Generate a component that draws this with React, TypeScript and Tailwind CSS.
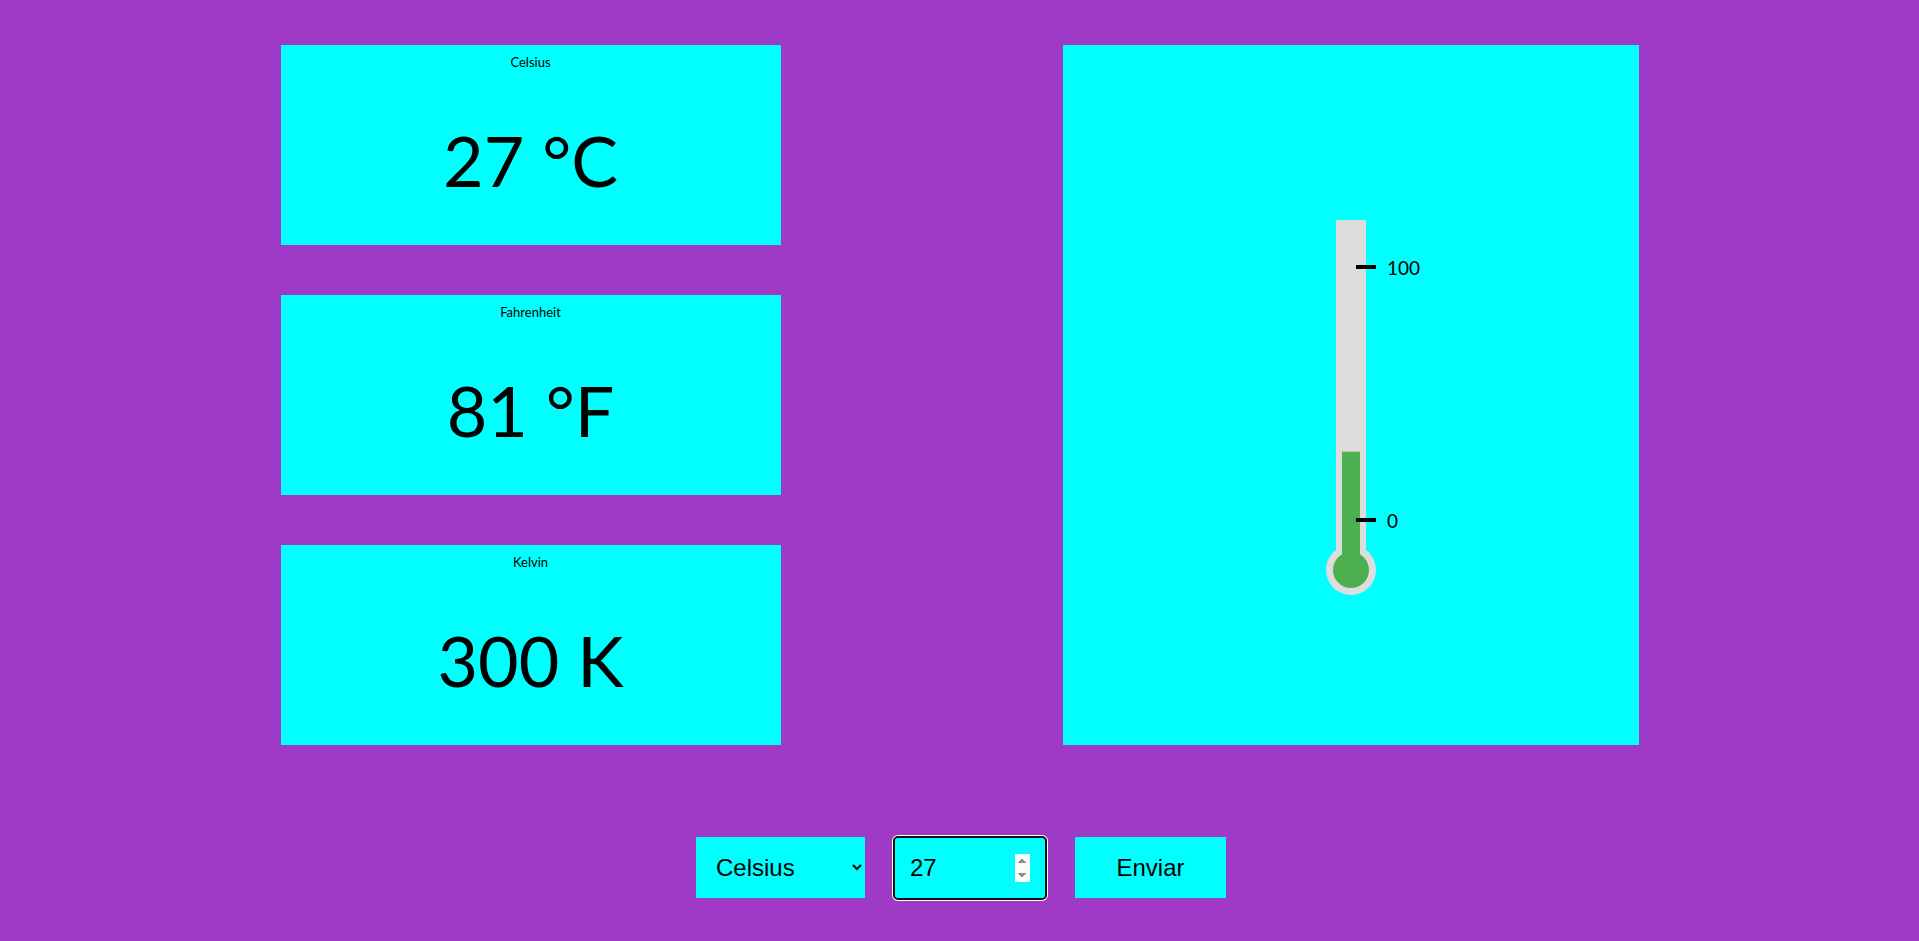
import React from 'react';

interface CardProps {
  label: string;
  value: string;
}

const TempCard: React.FC<CardProps> = ({ label, value }) => {
  return (
    <div className="w-[500px] h-[200px] bg-[#00ffff] flex flex-col text-black">
      <div className="pt-[9px] text-center text-[13px] leading-4">{label}</div>
      <div className="flex-1 flex items-center justify-center pt-[5px] text-[70px] leading-none">
        {value}
      </div>
    </div>
  );
};

const Thermometer: React.FC<{ celsius: number }> = ({ celsius }) => {
  // 0 °C sits at y=300, 100 °C at y=47
  const top = 300 - (celsius / 100) * 253;
  return (
    <svg width="200" height="380" viewBox="0 0 200 380">
      <rect x="85" y="0" width="30" height="350" fill="#dddddd" />
      <circle cx="100" cy="350" r="25" fill="#dddddd" />
      <rect x="91" y={top} width="18" height={350 - top} fill="#4caf50" />
      <circle cx="100" cy="350" r="18" fill="#4caf50" />
      <rect x="105" y="45" width="20" height="4" fill="#000" />
      <rect x="105" y="298" width="20" height="4" fill="#000" />
      <text x="136" y="50" fontSize="19" dominantBaseline="middle" fill="#000">100</text>
      <text x="136" y="303" fontSize="19" dominantBaseline="middle" fill="#000">0</text>
    </svg>
  );
};

export default function App() {
  return (
    <div className="min-h-[941px] bg-[#9f3ac6] font-['Lato',sans-serif]">
      <div className="mx-auto w-[1358px] pt-[45px] flex justify-between">
        <div className="flex flex-col gap-[50px]">
          <TempCard label="Celsius" value="27 °C" />
          <TempCard label="Fahrenheit" value="81 °F" />
          <TempCard label="Kelvin" value="300 K" />
        </div>
        <div className="w-[576px] h-[700px] bg-[#00ffff] flex justify-center pt-[175px]">
          <Thermometer celsius={27} />
        </div>
      </div>

      <div className="mt-[92px] flex justify-center items-center gap-[30px] pl-[3px] font-['Liberation_Sans',Arial,sans-serif] text-[24px] text-black">
        <select className="w-[169px] h-[61px] bg-[#00ffff] pl-[16px] pr-[8px] border-0" defaultValue="celsius">
          <option value="celsius">Celsius</option>
          <option value="fahrenheit">Fahrenheit</option>
          <option value="kelvin">Kelvin</option>
        </select>
        <input
          type="number"
          defaultValue={27}
          autoFocus
          className="w-[150px] h-[60px] bg-[#00ffff] pl-[15px] pr-[15px] rounded-[3px] outline-2 outline-[#101010] shadow-[0_0_0_3px_#ffffff]"
        />
        <button className="w-[151px] h-[61px] bg-[#00ffff]">Enviar</button>
      </div>
    </div>
  );
}
